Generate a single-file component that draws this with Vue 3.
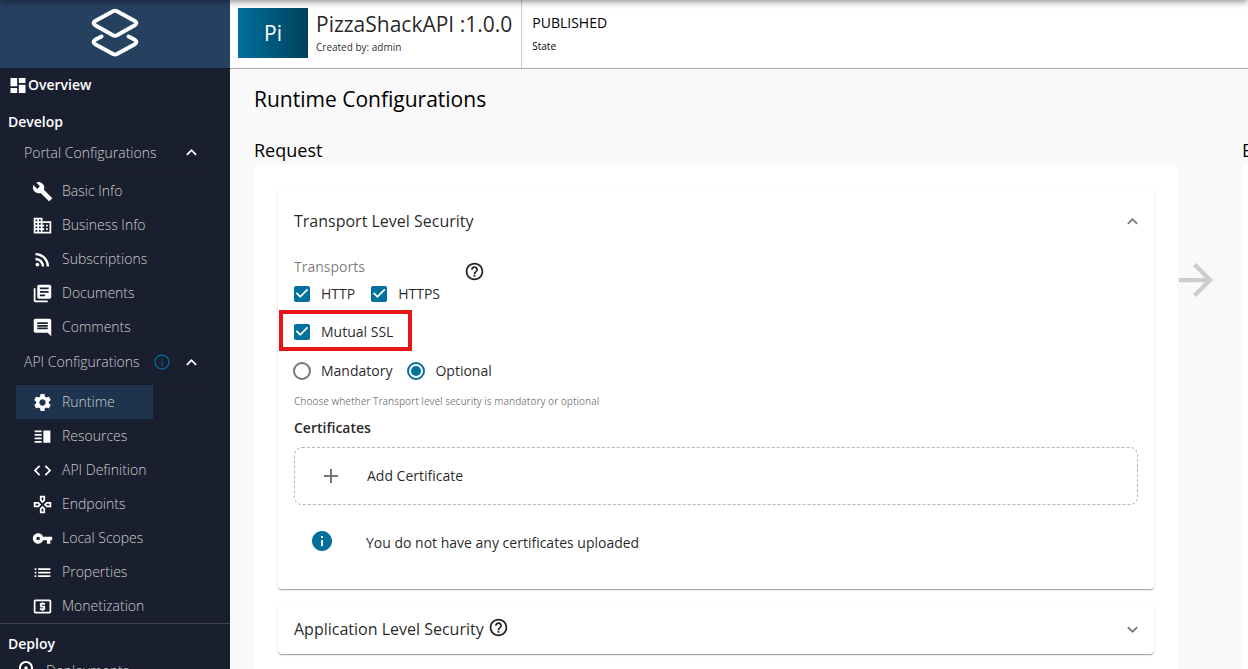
<script setup>
import { ref } from 'vue'

const icons = {
  dashboard: 'M3 13h8V3H3v10zm0 8h8v-6H3v6zm10 0h8V11h-8v10zm0-18v6h8V3h-8z',
  build: 'M22.7 19l-9.1-9.1c.9-2.3.4-5-1.5-6.9-2-2-5-2.4-7.4-1.3L9 6 6 9 1.6 4.7C.4 7.1.9 10.1 2.9 12.1c1.9 1.9 4.6 2.4 6.9 1.5l9.1 9.1c.4.4 1 .4 1.4 0l2.3-2.3c.5-.4.5-1.1.1-1.4z',
  business: 'M12 7V3H2v18h20V7H12zM6 19H4v-2h2v2zm0-4H4v-2h2v2zm0-4H4V9h2v2zm0-4H4V5h2v2zm4 12H8v-2h2v2zm0-4H8v-2h2v2zm0-4H8V9h2v2zm0-4H8V5h2v2zm10 12h-8v-2h2v-2h-2v-2h2v-2h-2V9h8v10zm-2-8h-2v2h2v-2zm0 4h-2v2h2v-2z',
  rss: 'M4 17.82a2.18 2.18 0 1 0 4.36 0a2.18 2.18 0 1 0-4.36 0zM4 4.44v2.83c7.03 0 12.73 5.7 12.73 12.73h2.83c0-8.59-6.97-15.56-15.56-15.56zm0 5.66v2.83c3.9 0 7.07 3.17 7.07 7.07h2.83c0-5.47-4.43-9.9-9.9-9.9z',
  library: 'M4 6H2v14c0 1.1.9 2 2 2h14v-2H4V6zm16-4H8c-1.1 0-2 .9-2 2v12c0 1.1.9 2 2 2h12c1.1 0 2-.9 2-2V4c0-1.1-.9-2-2-2zm-1 9H9V9h10v2zm-4 4H9v-2h6v2zm4-8H9V5h10v2z',
  comment: 'M21.99 4c0-1.1-.89-2-1.99-2H4c-1.1 0-2 .9-2 2v12c0 1.1.9 2 2 2h14l4 4-.01-18zM18 14H6v-2h12v2zm0-3H6V9h12v2zm0-3H6V6h12v2z',
  settings: 'M19.14 12.94c.04-.3.06-.61.06-.94 0-.32-.02-.64-.07-.94l2.03-1.58c.18-.14.23-.41.12-.61l-1.92-3.32c-.12-.22-.37-.29-.59-.22l-2.39.96c-.5-.38-1.03-.7-1.62-.94l-.36-2.54c-.04-.24-.24-.41-.48-.41h-3.84c-.24 0-.43.17-.47.41l-.36 2.54c-.59.24-1.13.57-1.62.94l-2.39-.96c-.22-.08-.47 0-.59.22L2.74 8.87c-.12.21-.08.47.12.61l2.03 1.58c-.05.3-.09.63-.09.94s.02.64.07.94l-2.03 1.58c-.18.14-.23.41-.12.61l1.92 3.32c.12.22.37.29.59.22l2.39-.96c.5.38 1.03.7 1.62.94l.36 2.54c.05.24.24.41.48.41h3.84c.24 0 .44-.17.47-.41l.36-2.54c.59-.24 1.13-.56 1.62-.94l2.39.96c.22.08.47 0 .59-.22l1.92-3.32c.12-.22.07-.47-.12-.61l-2.01-1.58zM12 15.6c-1.98 0-3.6-1.62-3.6-3.6s1.62-3.6 3.6-3.6 3.6 1.62 3.6 3.6-1.62 3.6-3.6 3.6z',
  split: 'M3 15h8v-2H3v2zm0 4h8v-2H3v2zm0-8h8V9H3v2zm0-6v2h8V5H3zm10 0h8v14h-8V5z',
  code: 'M9.4 16.6L4.8 12l4.6-4.6L8 6l-6 6 6 6 1.4-1.4zm5.2 0l4.6-4.6-4.6-4.6L16 6l6 6-6 6-1.4-1.4z',
  gamepad: 'M13 4v2.67l-1 1-1-1V4h2m7 7v2h-2.67l-1-1 1-1H20M6.67 11l1 1-1 1H4v-2h2.67M12 16.33l1 1V20h-2v-2.67l1-1M15 2H9v5.5l3 3 3-3V2zm7 7h-5.5l-3 3 3 3H22V9zM7.5 9H2v6h5.5l3-3-3-3zm4.5 4.5l-3 3V22h6v-5.5l-3-3z',
  key: 'M12.65 10C11.83 7.67 9.61 6 7 6c-3.31 0-6 2.69-6 6s2.69 6 6 6c2.61 0 4.83-1.67 5.65-4H17v4h4v-4h2v-4H12.65zM7 14c-1.1 0-2-.9-2-2s.9-2 2-2 2 .9 2 2-.9 2-2 2z',
  list: 'M3 13h2v-2H3v2zm0 4h2v-2H3v2zm0-8h2V7H3v2zm4 4h14v-2H7v2zm0 4h14v-2H7v2zM7 7v2h14V7H7z',
  money: 'M11 17h2v-1h1c.55 0 1-.45 1-1v-3c0-.55-.45-1-1-1h-3v-1h4V8h-2V7h-2v1h-1c-.55 0-1 .45-1 1v3c0 .55.45 1 1 1h3v1H9v2h2v1zm9-13H4c-1.11 0-1.99.89-1.99 2L2 18c0 1.11.89 2 2 2h16c1.11 0 2-.89 2-2V6c0-1.11-.89-2-2-2zm0 14H4V6h16v12z',
  place: 'M12 2C8.13 2 5 5.13 5 9c0 5.25 7 13 7 13s7-7.75 7-13c0-3.87-3.13-7-7-7zM7 9c0-2.76 2.24-5 5-5s5 2.24 5 5c0 2.88-2.88 7.19-5 9.88C9.92 16.21 7 11.85 7 9zM10.3 9a1.7 1.7 0 1 0 3.4 0a1.7 1.7 0 1 0-3.4 0z',
  help: 'M11 18h2v-2h-2v2zm1-16C6.48 2 2 6.48 2 12s4.48 10 10 10 10-4.48 10-10S17.52 2 12 2zm0 18c-4.41 0-8-3.59-8-8s3.59-8 8-8 8 3.59 8 8-3.59 8-8 8zm0-14c-2.21 0-4 1.79-4 4h2c0-1.1.9-2 2-2s2 .9 2 2c0 2-3 1.75-3 5h2c0-2.25 3-2.5 3-5 0-2.21-1.79-4-4-4z',
  info: 'M12 2C6.48 2 2 6.48 2 12s4.48 10 10 10 10-4.48 10-10S17.52 2 12 2zm1 15h-2v-6h2v6zm0-8h-2V7h2v2z',
  infoOutline: 'M12.7 9h-1.4V7.4h1.4V9zm0 8h-1.4v-6h1.4v6zM12 2C6.48 2 2 6.48 2 12s4.48 10 10 10 10-4.48 10-10S17.52 2 12 2zm0 18.4c-4.63 0-8.4-3.77-8.4-8.4S7.37 3.6 12 3.6s8.4 3.77 8.4 8.4-3.77 8.4-8.4 8.4z',
  less: 'M12 8l-6 6 1.41 1.41L12 10.83l4.59 4.58L18 14z',
  more: 'M16.59 8.59L12 13.17 7.41 8.59 6 10l6 6 6-6z',
  add: 'M19 13h-6v6h-2v-6H5v-2h6V5h2v6h6v2z',
  arrow: 'M12 4l-1.41 1.41L16.17 11H4v2h12.17l-5.58 5.59L12 20l8-8z'
}

const groups = [
  {
    title: 'Portal Configurations',
    items: [
      { label: 'Basic Info', icon: 'build' },
      { label: 'Business Info', icon: 'business' },
      { label: 'Subscriptions', icon: 'rss' },
      { label: 'Documents', icon: 'library' },
      { label: 'Comments', icon: 'comment' }
    ]
  },
  {
    title: 'API Configurations',
    info: true,
    items: [
      { label: 'Runtime', icon: 'settings', active: true },
      { label: 'Resources', icon: 'split' },
      { label: 'API Definition', icon: 'code' },
      { label: 'Endpoints', icon: 'gamepad' },
      { label: 'Local Scopes', icon: 'key' },
      { label: 'Properties', icon: 'list' },
      { label: 'Monetization', icon: 'money' }
    ]
  }
]

const http = ref(true)
const https = ref(true)
const mutualSsl = ref(true)
const requirement = ref('optional')
</script>

<template>
  <div class="page">
    <aside class="sidebar">
      <a class="logo" href="#" aria-label="APIs">
        <svg viewBox="0 0 50 50" fill="none" stroke="#fff" stroke-width="4" stroke-linecap="round" stroke-linejoin="round">
          <path d="M23 3.2Q25 2.2 27 3.2L44.8 13Q48 15 44.8 17.2L27 27.2Q25 28.2 23 27.2L5.2 17.2Q2 15 5.2 13Z" />
          <path d="M11.5 28.5L5.2 31.8Q2 34 5.2 36.2L23 46Q25 47 27 46L44.8 36.2Q48 34 44.8 31.8L38.5 28.5" />
        </svg>
      </a>
      <nav>
        <a class="overview" href="#">
          <svg class="icon" viewBox="0 0 24 24"><path :d="icons.dashboard" /></svg>
          <span>Overview</span>
        </a>
        <h2 class="section">Develop</h2>
        <div v-for="group in groups" :key="group.title" class="group">
          <button class="group-head" type="button" aria-expanded="true">
            <span class="group-title">{{ group.title }}</span>
            <svg v-if="group.info" class="icon note" viewBox="0 0 24 24"><path :d="icons.infoOutline" /></svg>
            <svg class="icon chevron" viewBox="0 0 24 24"><path :d="icons.less" /></svg>
          </button>
          <a v-for="item in group.items" :key="item.label" class="item" :class="{ active: item.active }" href="#">
            <svg class="icon" viewBox="0 0 24 24"><path :d="icons[item.icon]" /></svg>
            <span>{{ item.label }}</span>
          </a>
        </div>
        <div class="deploy">
          <h2 class="section">Deploy</h2>
          <a class="item deploy-item" href="#">
            <svg class="icon" viewBox="0 0 24 24"><path :d="icons.place" /></svg>
            <span>Deployments</span>
          </a>
        </div>
      </nav>
    </aside>

    <div class="main">
      <header class="topbar">
        <div class="thumb">Pi</div>
        <div class="api">
          <h1>PizzaShackAPI :1.0.0</h1>
          <p>Created by: admin</p>
        </div>
        <div class="state">
          <strong>PUBLISHED</strong>
          <span>State</span>
        </div>
      </header>

      <main class="content">
        <h2 class="page-title">Runtime Configurations</h2>
        <div class="flow">
          <section class="column">
            <h3>Request</h3>
            <div class="paper">
              <section class="card">
                <button class="card-head" type="button" aria-expanded="true">
                  <span>Transport Level Security</span>
                  <svg class="icon toggle" viewBox="0 0 24 24"><path :d="icons.less" /></svg>
                </button>
                <div class="card-body">
                  <div class="transports">
                    <fieldset>
                      <legend>Transports</legend>
                      <div class="options">
                        <label class="option"><input v-model="http" type="checkbox" />HTTP</label>
                        <label class="option"><input v-model="https" type="checkbox" />HTTPS</label>
                      </div>
                    </fieldset>
                    <button class="help" type="button" aria-label="Transports help">
                      <svg class="icon" viewBox="0 0 24 24"><path :d="icons.help" /></svg>
                    </button>
                  </div>
                  <div class="options">
                    <label class="option highlighted"><input v-model="mutualSsl" type="checkbox" />Mutual SSL</label>
                  </div>
                  <div class="options" role="radiogroup" aria-label="Requirement">
                    <label class="option"><input v-model="requirement" type="radio" name="requirement" value="mandatory" />Mandatory</label>
                    <label class="option"><input v-model="requirement" type="radio" name="requirement" value="optional" />Optional</label>
                  </div>
                  <p class="hint">Choose whether Transport level security is mandatory or optional</p>
                  <h4>Certificates</h4>
                  <button class="add" type="button">
                    <svg class="icon" viewBox="0 0 24 24"><path :d="icons.add" /></svg>
                    <span>Add Certificate</span>
                  </button>
                  <p class="empty">
                    <svg class="icon" viewBox="0 0 24 24"><path :d="icons.info" /></svg>
                    <span>You do not have any certificates uploaded</span>
                  </p>
                </div>
              </section>
              <section class="card">
                <button class="card-head short" type="button" aria-expanded="false">
                  <span>Application Level Security</span>
                  <svg class="icon help-mark" viewBox="0 0 24 24"><path :d="icons.help" /></svg>
                  <svg class="icon toggle" viewBox="0 0 24 24"><path :d="icons.more" /></svg>
                </button>
              </section>
            </div>
          </section>
          <div class="arrow">
            <svg viewBox="4 4 16 16"><path :d="icons.arrow" /></svg>
          </div>
          <section class="column">
            <h3>Backend</h3>
            <div class="paper"></div>
          </section>
        </div>
      </main>
    </div>
  </div>
</template>

<style>
body {
  margin: 0;
}
</style>

<style scoped>
.page {
  position: relative;
  display: flex;
  height: 100vh;
  overflow: hidden;
  font-family: "Open Sans", "Noto Sans", sans-serif;
  font-size: 14px;
  line-height: 20px;
  color: rgba(0, 0, 0, 0.87);
  background: #f9f9f9;
}
/* shadow cast by the app bar above the page */
.page::before {
  content: "";
  position: absolute;
  z-index: 2;
  top: -64px;
  left: 0;
  right: 0;
  height: 64px;
  pointer-events: none;
  box-shadow: 0 2px 4px -1px rgba(0, 0, 0, 0.2), 0 4px 5px 0 rgba(0, 0, 0, 0.14), 0 1px 10px 0 rgba(0, 0, 0, 0.12);
}
.page *,
.page *::before,
.page *::after {
  box-sizing: border-box;
}
h1, h2, h3, h4, p, fieldset {
  margin: 0;
  padding: 0;
  border: 0;
}
button {
  padding: 0;
  border: 0;
  background: none;
  font: inherit;
  color: inherit;
  text-align: left;
  cursor: pointer;
}
a {
  color: inherit;
  text-decoration: none;
}
.icon {
  flex: none;
  width: 21px;
  height: 21px;
  fill: currentColor;
}

.sidebar {
  flex: none;
  width: 230px;
  overflow: hidden;
  background: #1a1f2f;
  color: #fff;
}
.logo {
  display: flex;
  justify-content: center;
  height: 68px;
  padding-top: 8px;
  background: #264160;
}
.logo svg {
  width: 50px;
  height: 50px;
}
.overview {
  display: flex;
  align-items: center;
  height: 34px;
  padding-left: 8px;
  font-weight: 600;
}
.overview .icon {
  width: 20px;
}
.section {
  padding: 10px 8px 0;
  font-size: 14px;
  line-height: 20px;
  font-weight: 600;
}
.group {
  padding-left: 16px;
  font-weight: 300;
  color: #ccc;
}
.group + .group .group-head {
  height: 41px;
  padding-bottom: 4px;
}
.group-head {
  display: flex;
  align-items: center;
  width: 197px;
  height: 42px;
  padding-left: 8px;
  border-bottom: 1px solid #171b2a;
  font-weight: 300;
}
.group-title {
  width: 129px;
  white-space: nowrap;
}
.group-head .note {
  width: 18px;
  height: 18px;
  color: #00709c;
}
.chevron {
  margin-left: auto;
  margin-right: 11px;
  color: #fff;
}
.item {
  display: flex;
  align-items: center;
  gap: 9px;
  width: 137px;
  height: 34px;
  padding-left: 16px;
  white-space: nowrap;
}
.item .icon {
  color: #fff;
}
.item.active {
  background: #1e344e;
}
.deploy {
  border-top: 1px solid #3f4351;
}
.deploy-item {
  gap: 8px;
  padding-left: 14px;
  font-weight: 300;
  color: #ccc;
}
.deploy-item .icon {
  width: 24px;
  height: 24px;
}

.main {
  flex: 1;
  min-width: 0;
  overflow: hidden;
}
.topbar {
  display: flex;
  height: 69px;
  border-bottom: 1px solid #a7a7a7;
  background: #fff;
}
.thumb {
  display: flex;
  align-items: center;
  justify-content: center;
  width: 70px;
  height: 50px;
  margin: 8px;
  background: linear-gradient(to right, #00709c, #00405c);
  color: #fff;
  font-size: 21px;
}
.api {
  padding: 10px 9px 0 0;
  border-right: 1px solid #ccc;
}
.api h1 {
  font-size: 21px;
  line-height: 28px;
  font-weight: 400;
}
.api p {
  font-size: 10px;
  line-height: 18px;
}
.state {
  display: flex;
  flex-direction: column;
  padding: 13px 10px 0;
  color: #000;
}
.state strong {
  font-weight: 400;
}
.state span {
  padding-top: 3px;
  font-size: 10px;
}
.content {
  padding-left: 24px;
  color: #000;
}
.page-title {
  padding: 16px 0;
  font-size: 21px;
  line-height: 28px;
  font-weight: 400;
}
.flow {
  display: flex;
}
.column {
  flex: 0 0 calc(100% - 70px);
}
.column h3 {
  padding: 8px 0 2px;
  font-size: 18px;
  line-height: 26px;
  font-weight: 400;
}
.paper {
  min-height: 540px;
  padding: 24px;
  border-radius: 4px;
  background: #fff;
}
.card {
  margin-bottom: 15px;
  border-radius: 4px;
  background: #fff;
  color: rgba(0, 0, 0, 0.87);
  box-shadow: 0 2px 1px -1px rgba(0, 0, 0, 0.2), 0 1px 1px 0 rgba(0, 0, 0, 0.14), 0 1px 3px 0 rgba(0, 0, 0, 0.12);
}
.card-head {
  display: flex;
  align-items: center;
  width: 100%;
  height: 64px;
  padding: 0 11px 0 16px;
  font-size: 16px;
}
.card-head.short {
  height: 50px;
}
.toggle {
  margin-left: auto;
  color: #757575;
}
.help-mark {
  margin: 0 0 4px 4px;
}
.card-body {
  padding: 5px 16px 32px;
}
.transports {
  display: flex;
  gap: 24px;
  padding-bottom: 1px;
}
.transports .options {
  height: 35px;
}
legend {
  padding: 0;
  line-height: 18px;
  color: rgba(0, 0, 0, 0.54);
}
.help {
  height: 21px;
  margin-top: 3px;
}
.help .icon,
.help-mark {
  display: block;
}
.options {
  display: flex;
  gap: 16px;
  height: 39px;
}
.option {
  position: relative;
  display: flex;
  align-items: center;
  gap: 11px;
}
.highlighted::after {
  content: "";
  position: absolute;
  inset: -2px -19px 0 -15px;
  border: 4px solid #e41616;
  pointer-events: none;
}
.option input {
  appearance: none;
  display: grid;
  margin: 0;
  width: 16px;
  height: 16px;
  border-radius: 2px;
  cursor: pointer;
}
.option input[type="checkbox"] {
  border: 2px solid #757575;
}
.option input[type="checkbox"]:checked {
  border: 0;
  background: #00709c;
}
.option input[type="checkbox"]:checked::before {
  content: "";
  background: #fff;
  clip-path: polygon(39% 78%, 11% 50%, 19% 42%, 39% 62%, 81% 20%, 89% 28%);
}
.option input[type="radio"] {
  width: 18px;
  height: 18px;
  margin-left: -1px;
  margin-right: -1px;
  border: 2px solid #757575;
  border-radius: 50%;
  place-items: center;
}
.option input[type="radio"]:checked {
  border-color: #00709c;
}
.option input[type="radio"]:checked::before {
  content: "";
  width: 10px;
  height: 10px;
  border-radius: 50%;
  background: #00709c;
}
.hint {
  padding-top: 2px;
  font-size: 10px;
  line-height: 18px;
  color: rgba(0, 0, 0, 0.54);
}
h4 {
  padding: 8px 0 9px;
  font-size: 14px;
  font-weight: 600;
}
.add {
  display: flex;
  align-items: center;
  gap: 24px;
  width: 100%;
  height: 58px;
  padding-left: 24px;
  border: 1px dashed #b7b7b7;
  border-radius: 8px;
}
.add .icon {
  width: 24px;
  height: 24px;
  color: #757575;
}
.empty {
  display: flex;
  align-items: flex-start;
  gap: 32px;
  padding: 24px 0 0 16px;
  line-height: 28px;
}
.empty .icon {
  width: 24px;
  height: 24px;
  color: #00709c;
}
.arrow {
  flex: none;
  width: 64px;
  padding: 134px 0 0 1px;
}
.arrow svg {
  display: block;
  width: 34px;
  height: 34px;
  fill: #ccc;
}
</style>
